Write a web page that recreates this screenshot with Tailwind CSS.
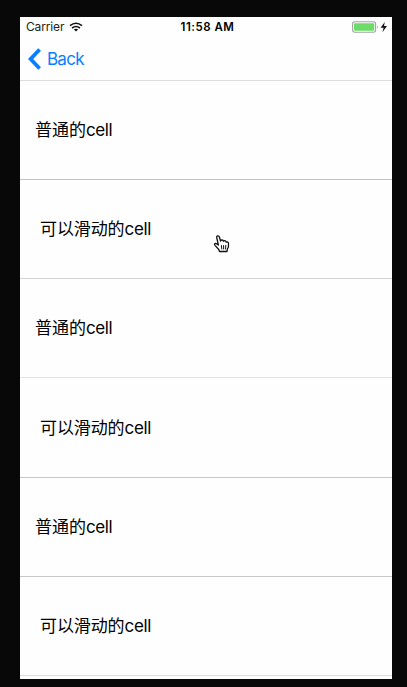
<!DOCTYPE html>
<html lang="zh-CN">
<head>
<meta charset="utf-8">
<title>Cells</title>
<script src="https://cdn.jsdelivr.net/npm/@tailwindcss/browser@4"></script>
</head>
<body class="bg-[#080808] w-[407px] h-[687px] overflow-hidden pt-[17px] pl-5 font-['Inter','Noto_Sans_CJK_SC',sans-serif] text-black">
<main class="relative w-[372px] h-[662px] bg-[#fefefe] overflow-hidden flex flex-col">
  <header class="h-16 shrink-0 border-b border-[#dcdcdc]">
    <div class="h-5 grid grid-cols-3 items-center text-[12px] leading-5">
      <div class="flex items-center pl-1.5 gap-[5px] text-[#222]">
        <span class="tracking-[-0.15px]">Carrier</span>
        <svg class="w-[14px] h-[10px]" viewBox="0 0 14 10" fill="none" stroke="#111" stroke-width="1.6"><path d="M1 3.6Q7-1.2 13 3.6M3.1 6Q7 2.9 10.9 6"/><path d="M4.9 7.5Q7 5.9 9.1 7.5L7 9.6Z" fill="#111" stroke="none"/></svg>
      </div>
      <div class="text-center font-semibold text-[11.5px] tracking-[0.5px] pl-[3px] whitespace-nowrap">11:58 AM</div>
      <div class="flex items-center justify-end pr-1">
        <svg class="w-[36px] h-[12px]" viewBox="0 0 36 12"><rect x=".6" y=".7" width="23" height="10.6" rx="2.2" fill="#fff" stroke="#a3a3a3" stroke-width="1.1"/><rect x="2" y="2.2" width="20.2" height="7.6" rx=".8" fill="#6bdc65"/><path d="M25.3 4.2Q27 6 25.3 7.8Z" fill="#999"/><path d="M32.8 1L28.6 6.8H31.6L30.4 11.2L35 5.1H32Z" fill="#111"/></svg>
      </div>
    </div>
    <div class="h-[43px] flex items-center pl-2 text-[#087fff] text-[17px]">
      <svg class="w-[13px] h-[22px]" viewBox="0 0 13 22" fill="none" stroke="#087fff" stroke-width="3.8"><path d="M11.6 1.5L2.6 11L11.6 20.5"/></svg>
      <span class="ml-1.5 mt-0.5 tracking-[-0.75px]">Back</span>
    </div>
  </header>
  <ul class="text-[17px] leading-6">
    <li class="h-[99px] border-b border-[#c4c4c4] flex items-center pl-[15px]"><span>普通的<span class="tracking-[-0.4px]">cell</span></span></li>
    <li class="h-[99px] border-b border-[#d3d3d3] flex items-center pl-5"><span class="tracking-[-0.1px]">可以滑动的<span class="tracking-[-0.3px]">cell</span></span></li>
    <li class="h-[99px] border-b border-[#e2e2e2] flex items-center pl-[15px]"><span>普通的<span class="tracking-[-0.4px]">cell</span></span></li>
    <li class="h-[100px] border-b border-[#c8c8c8] flex items-center pl-5"><span class="tracking-[-0.1px]">可以滑动的<span class="tracking-[-0.3px]">cell</span></span></li>
    <li class="h-[99px] border-b border-[#c8c8c8] flex items-center pl-[15px]"><span>普通的<span class="tracking-[-0.4px]">cell</span></span></li>
    <li class="h-[99px] border-b border-[#dcdcdc] flex items-center pl-5"><span class="tracking-[-0.1px]">可以滑动的<span class="tracking-[-0.3px]">cell</span></span></li>
  </ul>
  <svg class="absolute left-[193px] top-[217px] w-[18px] h-[20px]" viewBox="0 0 18 20" fill="#fff" stroke="#111" stroke-width="1.3" stroke-linejoin="round" stroke-linecap="round"><path d="M6.5 17.5L5.8 15.5L2 11.4Q.8 9.6 2.4 9.3Q3.6 9.2 5.4 11L3.8 4Q3.4 2 4.7 1.8Q6 1.6 6.5 3.3L7.5 7Q8 5.6 9.8 6.2L10.4 7.2Q11.5 6 13 7.6L13.2 8.2Q15 7.4 15.5 9.3Q16 13 14.3 15.2L14 17.5Z"/><path d="M8.4 11.5L8.8 15M10.6 11.5V15M12.8 11.5L12.5 15" stroke-width="1"/></svg>
</main>
</body>
</html>
